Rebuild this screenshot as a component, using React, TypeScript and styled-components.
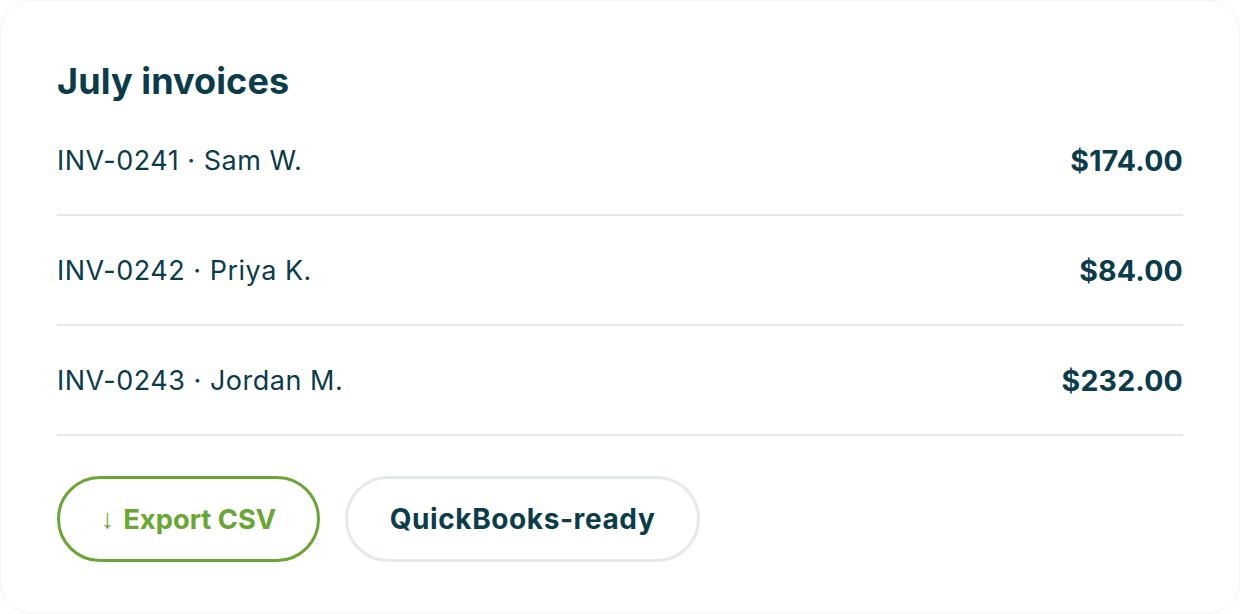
import React from "react";
import styled, { createGlobalStyle } from "styled-components";

const Global = createGlobalStyle`
  html, body { margin: 0; padding: 0; background: #ffffff; }
  body { font-family: "Inter", "Noto Sans", sans-serif; }
  * { box-sizing: border-box; }
`;

const Card = styled.div`
  width: 1240px;
  height: 614px;
  border: 1px solid #f3f3f3;
  border-radius: 32px;
  background: #fff;
  padding: 56px 56px 0 56px;
  display: flex;
  flex-direction: column;
  color: #0b3c4a;
`;

const Title = styled.h2`
  margin: 0;
  font-size: 36px;
  line-height: 49px;
  font-weight: 700;
  letter-spacing: 0.1px;
`;

const List = styled.div`
  display: flex;
  flex-direction: column;
`;

const Row = styled.div`
  display: flex;
  align-items: center;
  justify-content: space-between;
  height: 110px;
  border-bottom: 2px solid #e4e9eb;
`;

const Label = styled.span`
  font-size: 27px;
  font-weight: 400;
  letter-spacing: 0.5px;
`;

const Amount = styled.span`
  font-size: 28.5px;
  font-weight: 700;
  letter-spacing: 0.2px;
`;

const Actions = styled.div`
  display: flex;
  gap: 25px;
  margin-top: 40px;
`;

const Pill = styled.button<{ $tone: "green" | "plain" }>`
  display: flex;
  align-items: center;
  justify-content: center;
  width: ${(p) => (p.$tone === "green" ? 263 : 355)}px;
  height: 86px;
  padding: 0;
  border-radius: 43px;
  background: #fff;
  border: 3px solid ${(p) => (p.$tone === "green" ? "#6aa633" : "#e4e9eb")};
  color: ${(p) => (p.$tone === "green" ? "#6aa633" : "#0b3c4a")};
  font-family: inherit;
  font-size: ${(p) => (p.$tone === "green" ? 27.3 : 28)}px;
  font-weight: 700;
  letter-spacing: ${(p) => (p.$tone === "green" ? 0 : 0.6)}px;
  cursor: pointer;
`;

const Arrow = styled.span`
  font-family: "Liberation Sans", sans-serif;
  font-weight: 400;
  font-size: 27px;
  margin-right: 9px;
`;

const rows = [
  { id: "INV-0241", name: "Sam W.", amount: "$174.00" },
  { id: "INV-0242", name: "Priya K.", amount: "$84.00" },
  { id: "INV-0243", name: "Jordan M.", amount: "$232.00" },
];

export default function App() {
  return (
    <>
      <Global />
      <Card>
        <Title>July invoices</Title>
        <List>
          {rows.map((r) => (
            <Row key={r.id}>
              <Label>
                {r.id} · {r.name}
              </Label>
              <Amount>{r.amount}</Amount>
            </Row>
          ))}
        </List>
        <Actions>
          <Pill $tone="green">
            <Arrow>↓</Arrow>Export CSV
          </Pill>
          <Pill $tone="plain">QuickBooks-ready</Pill>
        </Actions>
      </Card>
    </>
  );
}
